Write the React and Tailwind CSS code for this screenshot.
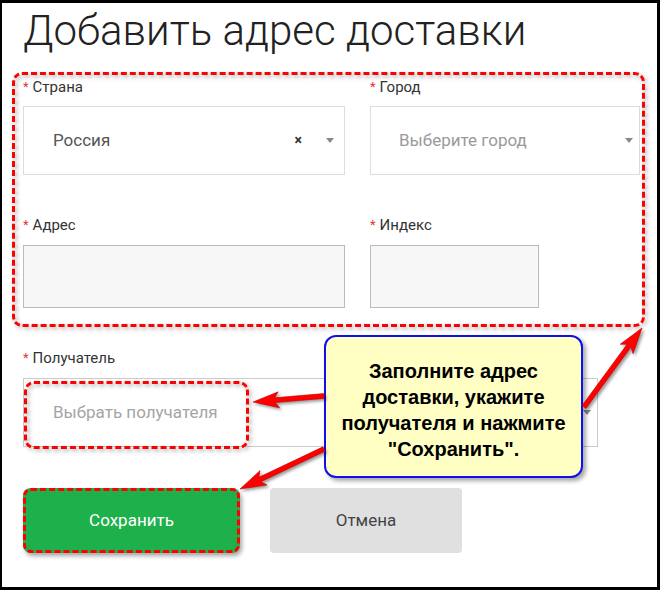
import React from "react";

// tail -> tip arrow polygon
const Arrow = ({ from, to }) => {
  const [x1, y1] = from;
  const [x2, y2] = to;
  const dx = x2 - x1;
  const dy = y2 - y1;
  const len = Math.hypot(dx, dy);
  const ux = dx / len;
  const uy = dy / len;
  const vx = -uy;
  const vy = ux;
  const w = 2.4;
  const L = 22;
  const H = 8;
  const n = 4;
  const pt = (u, v) => `${x1 + ux * u + vx * v},${y1 + uy * u + vy * v}`;
  const points = [
    pt(0, -w),
    pt(len - L, -w),
    pt(len - L - n, -H),
    pt(len, 0),
    pt(len - L - n, H),
    pt(len - L, w),
    pt(0, w),
  ].join(" ");
  return <polygon points={points} fill="#ff0000" stroke="#c00000" strokeWidth="0.6" />;
};

const Label = ({ children }) => (
  <div className="flex items-center h-[18px] text-[15px] text-[#333] leading-none">
    <span className="text-[#e5343a] text-[13px] mr-[4px] -mt-[2px]">*</span>
    {children}
  </div>
);

const Caret = () => (
  <span className="w-0 h-0 border-l-[4px] border-r-[4px] border-t-[5px] border-l-transparent border-r-transparent border-t-[#888]" />
);

export default function App() {
  return (
    <div className="w-[660px] h-[590px] bg-black pt-[3px] pl-[2px] pr-[3px] pb-[3px] font-['Roboto',sans-serif]">
      <div className="relative h-full bg-white pl-[21px]">
        <h1 className="pt-[7px] text-[42px] leading-none font-light text-[#222]">
          Добавить адрес доставки
        </h1>

        {/* address fields */}
        <div className="relative mt-[26px] w-[617px] grid grid-cols-[322px_270px] gap-x-[25px]">
          <div>
            <Label>Страна</Label>
            <div className="mt-[10px] h-[69px] border border-[#ddd] flex items-center pl-[29px] pr-[10px]">
              <span className="text-[17px] text-[#555] flex-1">Россия</span>
              <span className="text-[14px] font-bold text-[#333] mr-[24px]">×</span>
              <Caret />
            </div>
          </div>
          <div>
            <Label>Город</Label>
            <div className="mt-[10px] h-[69px] border border-[#ddd] flex items-center pl-[28px] pr-[6px]">
              <span className="text-[17px] text-[#9a9a9a] flex-1">Выберите город</span>
              <Caret />
            </div>
          </div>
          <div className="mt-[41px]">
            <Label>Адрес</Label>
            <div className="mt-[11px] h-[63px] border border-[#bbb] bg-[#f7f7f7]" />
          </div>
          <div className="mt-[41px]">
            <Label>Индекс</Label>
            <div className="mt-[11px] w-[169px] h-[63px] border border-[#bbb] bg-[#f7f7f7]" />
          </div>
          <div className="absolute -left-[11px] -top-[6px] -right-[5px] -bottom-[19px] rounded-[10px] border-[3px] border-dashed border-[#ff0000] drop-shadow-[2px_2px_2px_rgba(0,0,0,0.35)] pointer-events-none" />
        </div>

        {/* recipient */}
        <div className="mt-[41px]">
          <Label>Получатель</Label>
          <div className="relative mt-[11px] w-[575px] h-[69px] border border-[#ccc] flex items-center pl-[29px] pr-[6px]">
            <span className="text-[17px] text-[#a5a5a5] flex-1">Выбрать получателя</span>
            <Caret />
            <div className="absolute left-0 top-[2px] w-[225px] h-[68px] rounded-[10px] border-[3px] border-dashed border-[#ff0000] drop-shadow-[2px_2px_2px_rgba(0,0,0,0.35)] pointer-events-none" />
          </div>
        </div>

        {/* buttons */}
        <div className="mt-[41px] flex gap-[30px]">
          <button className="relative w-[217px] h-[65px] rounded-[8px] bg-[#1db04b] text-white text-[17px] shadow-[2px_3px_4px_rgba(0,0,0,0.35)]">
            Сохранить
            <span className="absolute inset-0 rounded-[8px] border-[3px] border-dashed border-[#ff0000]" />
          </button>
          <button className="w-[192px] h-[65px] rounded-[4px] bg-[#e0e0e0] text-[#444] text-[17px]">
            Отмена
          </button>
        </div>

        {/* callout */}
        <div className="absolute left-[322px] top-[332px] w-[259px] h-[143px] rounded-[12px] border-2 border-[#1010ee] bg-[#ffffc4] shadow-[3px_3px_4px_rgba(0,0,0,0.35)] flex items-center justify-center pt-[6px] text-center font-['Liberation_Sans',Arial,sans-serif] font-bold text-[20px] leading-[26px] text-black">
          <p>
            Заполните адрес
            <br />
            доставки, укажите
            <br />
            получателя и нажмите
            <br />
            "Сохранить".
          </p>
        </div>

        {/* arrows */}
        <svg
          className="absolute inset-0 pointer-events-none drop-shadow-[2px_2px_1.5px_rgba(0,0,0,0.4)]"
          width="655"
          height="584"
        >
          <Arrow from={[322, 393]} to={[251, 399]} />
          <Arrow from={[322, 446]} to={[238, 486]} />
          <Arrow from={[582, 404]} to={[640, 325]} />
        </svg>
      </div>
    </div>
  );
}
